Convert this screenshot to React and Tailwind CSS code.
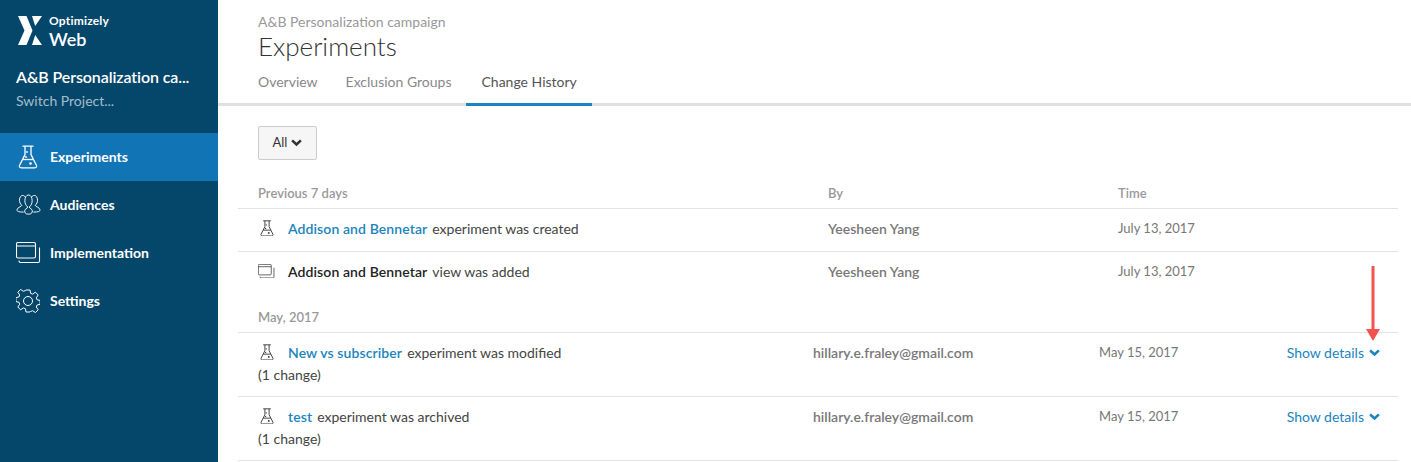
import React from 'react';

const FONT = "font-['Lato','Open_Sans',sans-serif]";

const Flask = ({ className }) => (
  <svg viewBox="0 0 20 24" fill="none" stroke="currentColor" strokeWidth="1.300" className={className}>
    <path d="M4.500 1.200h11M7 1.200v8.300L1.600 20.200c-.7 1.400.1 2.600 1.600 2.600h13.600c1.500 0 2.300-1.200 1.600-2.600L13 9.500V1.200" />
    <path d="M4.600 14.500h10.800" />
    <circle cx="9" cy="7" r=".9" fill="currentColor" stroke="none" />
    <circle cx="8" cy="12" r=".9" fill="currentColor" stroke="none" />
    <circle cx="12.500" cy="18.500" r="1.300" fill="currentColor" stroke="none" />
  </svg>
);

const People = ({ className }) => (
  <svg viewBox="0 0 26 22" fill="none" stroke="currentColor" strokeWidth="1" className={className}>
    <path d="M9 17.500c0-2 3-2.300 3.200-4-2-1.500-3-4-3-6.500C9.200 3.400 10.800 1 13 1s3.800 2.400 3.800 6c0 2.500-1 5-3 6.500.2 1.700 3.200 2 3.200 4 0 2-1 3.500-4 3.500s-4-1.500-4-3.500z" />
    <path d="M9.500 3C8.800 1.800 7.800 1.500 7 1.500 5 1.500 3.600 3.500 3.600 6.500c0 2 .9 4 2.400 5.200 0 1.500-5 2.300-5 4.800 0 1.500 1.500 2.300 7 2.300" />
    <path d="M16.500 3c.7-1.200 1.700-1.500 2.500-1.500 2 0 3.400 2 3.400 5 0 2-.9 4-2.400 5.200 0 1.500 5 2.300 5 4.800 0 1.500-1.500 2.300-7 2.300" />
  </svg>
);

const Windows = ({ className }) => (
  <svg viewBox="0 0 25 22" fill="none" stroke="currentColor" strokeWidth="1.100" className={className}>
    <rect x=".5" y=".5" width="19" height="15.500" rx="1.500" />
    <path d="M.5 4h19M3 18.500v.5c0 .8.7 1.500 1.500 1.500H22c.8 0 1.500-.7 1.500-1.500V5.500" />
  </svg>
);

const Gear = ({ className }) => (
  <svg viewBox="0 0 24 24" fill="none" stroke="currentColor" strokeWidth="1" className={className}>
    <circle cx="12" cy="12" r="4.500" />
    <path d="M10 1h4l.6 3.300 2 .8 2.800-1.900 2.800 2.800-1.900 2.800.8 2 3 .6v4l-3 .6-.8 2 1.900 2.800-2.800 2.800-2.800-1.900-2 .8L14 23h-4l-.6-3.300-2-.8-2.800 1.900-2.800-2.800 1.900-2.800-.8-2-3-.6v-4l3-.6.8-2-1.900-2.800 2.800-2.800 2.800 1.900 2-.8z" strokeLinejoin="round" />
  </svg>
);

const Chevron = ({ className }) => (
  <svg viewBox="0 0 12 8" fill="none" stroke="currentColor" strokeWidth="2.800" className={className}>
    <path d="M1.200 1.500 6 6l4.800-4.500" />
  </svg>
);

const NavItem = ({ icon: Icon, label, active, iconClass }) => (
  <div className={`flex h-12 items-center pl-4 text-[14px] font-bold text-white ${active ? 'bg-[#1175b5]' : ''}`}>
    <span className="flex w-[34px] shrink-0">
      <Icon className={iconClass} />
    </span>
    <span className="mb-[2px]">{label}</span>
  </div>
);

const Row = ({ icon: Icon, iconClass, name, bold, action, sub, by, time, cols, details }) => (
  <div className={`grid border-b border-[#e3e3e3] pl-5 text-[14px] text-[#555] ${cols}`}>
    <div className={sub ? 'h-[63px] pt-[9px]' : 'h-[42px] pt-[9px]'}>
      <div className="flex h-5 items-center">
        <span className="flex w-[30px] shrink-0">
          <Icon className={`${iconClass} text-[#333]`} />
        </span>
        <span className={bold ? 'font-semibold tracking-[.1px] text-[#222]' : 'font-semibold tracking-[.1px] text-[#1a84bd]'}>{name}</span>
        <span className="ml-[5px] text-[#444]">{action}</span>
      </div>
      {sub && <div className="mt-[2px] text-[#444]">{sub}</div>}
    </div>
    <div className="pt-[9px] font-semibold text-[#777]">{by}</div>
    <div className="pt-[10px] text-[13px] text-[#777]">{time}</div>
    {details && (
      <div className="flex items-start justify-end pr-[18px] pt-[9px] text-[#1a84bd]">
        Show details
        <Chevron className="ml-[5px] mt-[7px] w-[11px]" />
      </div>
    )}
  </div>
);

export default function App() {
  return (
    <div className={`relative flex h-[462px] w-[1411px] overflow-hidden bg-white ${FONT}`}>
      <aside className="w-[218px] shrink-0 bg-[#05476a] text-white">
        <div className="flex h-[52px] items-start pl-[18px] pt-[16px]">
          <svg viewBox="0 0 24 29" className="w-[24px]" fill="#fff">
            <path d="M0 0h8.500l6 14.500-6 14.500H0l6.500-14.500zM14 0h10l-6.800 10zM17.200 19 24 29H14z" />
          </svg>
          <div className="ml-[7px] leading-none">
            <div className="mt-[-1px] text-[12px] font-bold tracking-[.2px]">Optimizely</div>
            <div className="mt-[3px] text-[18px] font-semibold">Web</div>
          </div>
        </div>
        <div className="mt-[15px] truncate pl-4 text-[16px] font-semibold leading-5 tracking-[-.1px]">A&amp;B Personalization ca...</div>
        <div className="mt-[4px] pl-4 text-[14px] leading-5 text-[#a4bdcb]">Switch Project...</div>
        <div className="mt-[22px]">
          <NavItem icon={Flask} label="Experiments" active iconClass="ml-[2px] w-[20px]" />
          <NavItem icon={People} label="Audiences" iconClass="w-[25px]" />
          <NavItem icon={Windows} label="Implementation" iconClass="w-[25px]" />
          <NavItem icon={Gear} label="Settings" iconClass="w-[24px]" />
        </div>
      </aside>

      <main className="min-w-0 flex-1">
        <header className="border-b-[3px] border-[#e0e0e0] pl-10">
          <div className="pt-[13px] text-[14px] leading-[18px] text-[#999]">A&amp;B Personalization campaign</div>
          <h1 className="mt-[-1px] text-[26px] font-light leading-[32px] text-[#333]">Experiments</h1>
          <nav className="mt-[3px] flex h-[38px] text-[14px] text-[#888]">
            <span className="pt-[6px] pr-[28px]">Overview</span>
            <span className="pt-[6px] pr-[15px]">Exclusion Groups</span>
            <span className="-mb-[3px] h-[41px] border-b-[3px] border-[#1a84bd] px-[15px] pt-[6px] text-[#555]">Change History</span>
          </nav>
        </header>

        <div className="pl-5 pr-[13px]">
          <div className="pl-5 pt-[20px]">
            <button className="flex h-[34px] w-[59px] items-center justify-center rounded-[2px] border border-[#ccc] bg-[#f6f6f6] text-[13px] text-[#333]">
              All
              <Chevron className="ml-[4px] w-[11px]" />
            </button>
          </div>

          <div className="mt-[17px] grid h-[32px] grid-cols-[570px_290px_1fr] items-start border-b border-[#e3e3e3] pl-5 pt-[7px] text-[13px] font-semibold text-[#999]">
            <span>Previous 7 days</span>
            <span>By</span>
            <span>Time</span>
          </div>
          <Row
            icon={Flask}
            iconClass="ml-[2px] w-[14px]"
            name="Addison and Bennetar"
            action="experiment was created"
            by="Yeesheen Yang"
            time="July 13, 2017"
            cols="grid-cols-[570px_290px_1fr]"
          />
          <Row
            icon={Windows}
            iconClass="w-[17px]"
            name="Addison and Bennetar"
            bold
            action="view was added"
            by="Yeesheen Yang"
            time="July 13, 2017"
            cols="grid-cols-[570px_290px_1fr] border-b-0"
          />

          <div className="mt-[14px] h-[25px] border-b border-[#e3e3e3] pl-5 text-[13px] font-semibold text-[#999]">May, 2017</div>
          <Row
            icon={Flask}
            iconClass="ml-[2px] w-[14px]"
            name="New vs subscriber"
            action="experiment was modified"
            sub="(1 change)"
            by="hillary.e.fraley@gmail.com"
            time="May 15, 2017"
            cols="grid-cols-[555px_286px_1fr_auto]"
            details
          />
          <Row
            icon={Flask}
            iconClass="ml-[2px] w-[14px]"
            name="test"
            action="experiment was archived"
            sub="(1 change)"
            by="hillary.e.fraley@gmail.com"
            time="May 15, 2017"
            cols="grid-cols-[555px_286px_1fr_auto]"
            details
          />
        </div>
      </main>

      {/* annotation arrow drawn over the page */}
      <svg viewBox="0 0 16 76" className="absolute left-[1365px] top-[266px] w-[16px]">
        <path d="M8 1v64" stroke="#f4524f" strokeWidth="3" strokeLinecap="round" />
        <path d="M1 63h14l-7 12z" fill="#f4524f" />
      </svg>
    </div>
  );
}
